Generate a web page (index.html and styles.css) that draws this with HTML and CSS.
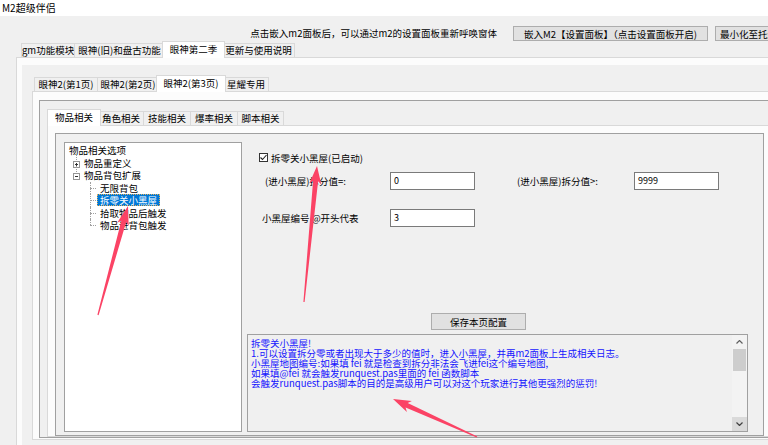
FILE: index.html
```html
<!DOCTYPE html>
<html>
<head>
    <meta charset="utf-8">
    <title>M2超级伴侣</title>
    <link rel="stylesheet" href="styles.css">
</head>
<body>
<div class="window">
    <div class="titlebar">M2超级伴侣</div>

    <!-- hint + top buttons -->
    <div class="toprow">
        <span class="hint">点击嵌入m2面板后，可以通过m2的设置面板重新呼唤窗体</span>
        <button class="btn btn-embed">嵌入M2【设置面板】（点击设置面板开启)</button>
        <button class="btn btn-tray">最小化至托盘</button>
    </div>

    <!-- level 1 tabs -->
    <div class="tabctl l1">
        <div class="tabs">
            <div class="tab">gm功能模块</div>
            <div class="tab">眼神(旧)和盘古功能</div>
            <div class="tab on">眼神第二季</div>
            <div class="tab">更新与使用说明</div>
        </div>
        <div class="panel">
            <div class="page1">

                <!-- level 2 tabs -->
                <div class="tabctl l2">
                    <div class="tabs">
                        <div class="tab">眼神2(第1页)</div>
                        <div class="tab">眼神2(第2页)</div>
                        <div class="tab on">眼神2(第3页)</div>
                        <div class="tab">星耀专用</div>
                    </div>
                    <div class="panel">
                        <div class="bevel">

                            <!-- level 3 tabs -->
                            <div class="tabctl l3">
                                <div class="tabs">
                                    <div class="tab on">物品相关</div>
                                    <div class="tab">角色相关</div>
                                    <div class="tab">技能相关</div>
                                    <div class="tab">爆率相关</div>
                                    <div class="tab">脚本相关</div>
                                </div>
                                <div class="panel">
                                    <div class="page3">
                                        <div class="tree">
                                            <div class="node lvl0">物品相关选项</div>
                                            <div class="node lvl1">
                                                <svg class="exp" width="7" height="7" viewBox="0 0 7 7"><rect x="0.5" y="0.5" width="6" height="6" fill="#fff" stroke="#969696"/><path d="M2 3.5h3M3.5 2v3" stroke="#333" stroke-width="1"/></svg>物品重定义
                                            </div>
                                            <div class="node lvl1">
                                                <svg class="exp" width="7" height="7" viewBox="0 0 7 7"><rect x="0.5" y="0.5" width="6" height="6" fill="#fff" stroke="#969696"/><path d="M2 3.5h3" stroke="#333" stroke-width="1"/></svg>物品背包扩展
                                            </div>
                                            <div class="node lvl2"><span class="label">无限背包</span></div>
                                            <div class="node lvl2"><span class="label selected">拆零关小黑屋</span></div>
                                            <div class="node lvl2"><span class="label">拾取物品后触发</span></div>
                                            <div class="node lvl2 last"><span class="label">物品进背包触发</span></div>
                                        </div>

                                        <div class="form">
                                            <div class="chk-row">
                                                <span class="chk">
                                                    <svg width="9" height="9" viewBox="0 0 9 9"><path d="M1.5 4.5l2 2 4-4.5" fill="none" stroke="#222" stroke-width="1.1"/></svg>
                                                </span>
                                                <span>拆零关小黑屋(已启动)</span>
                                            </div>
                                            <div class="field-row row1">
                                                <span class="lbl lbl-a">(进小黑屋)拆分值=:</span>
                                                <span class="edit">0</span>
                                                <span class="lbl lbl-b">(进小黑屋)拆分值&gt;:</span>
                                                <span class="edit">9999</span>
                                            </div>
                                            <div class="field-row row2">
                                                <span class="lbl lbl-c">小黑屋编号 @开头代表</span>
                                                <span class="edit">3</span>
                                            </div>
                                            <div class="save-row">
                                                <button class="btn btn-save">保存本页配置</button>
                                            </div>
                                            <div class="memo">
                                                <div class="memo-text">
                                                    <div>拆零关小黑屋!</div>
                                                    <div>1.可以设置拆分零或者出现大于多少的值时，进入小黑屋，并再m2面板上生成相关日志。</div>
                                                    <div>小黑屋地图编号:如果填 fei 就是检查到拆分非法会飞进fei这个编号地图,</div>
                                                    <div>如果填@fei 就会触发runquest.pas里面的 fei 函数脚本</div>
                                                    <div>会触发runquest.pas脚本的目的是高级用户可以对这个玩家进行其他更强烈的惩罚!</div>
                                                </div>
                                                <div class="sb">
                                                    <div class="sb-btn">
                                                        <svg width="7" height="4" viewBox="0 0 7 4"><path d="M0.5 3.5l3-3 3 3" fill="none" stroke="#606060" stroke-width="1.2"/></svg>
                                                    </div>
                                                    <div class="sb-thumb"></div>
                                                    <div class="sb-btn sb-down">
                                                        <svg width="7" height="4" viewBox="0 0 7 4"><path d="M0.5 0.5l3 3 3-3" fill="none" stroke="#404040" stroke-width="1.2"/></svg>
                                                    </div>
                                                </div>
                                            </div>
                                        </div>
                                    </div>
                                </div>
                            </div>

                        </div>
                    </div>
                </div>

            </div>
        </div>
    </div>

    <!-- red annotation arrows drawn over the screenshot -->
    <svg class="arrows" width="768" height="445" viewBox="0 0 768 445">
        <polygon points="98.6,315.2 126.2,222.1 128.7,225.9 128,206 117.2,222.7 121.3,220.8 97.4,314.8"/>
        <polygon points="304.6,302 318.1,181.2 321.3,184.5 317,166 309.3,183.4 313.1,180.7 303.4,302"/>
        <polygon points="477.3,436.4 407.7,402.9 411.9,401 393,399 406.9,411.9 405.6,407.5 476.7,437.6"/>
    </svg>
</div>
</body>
</html>
```

FILE: styles.css
```css
* {
    box-sizing: border-box;
}
body {
    margin: 0;
    width: 768px;
    height: 445px;
    overflow: hidden;
    background-color: #f0f0f0;
    font-family: "Noto Sans CJK SC", "Microsoft YaHei", sans-serif;
    font-size: 9.5px;
    color: #000;
}
.window {
    position: relative;
    width: 820px;
    height: 445px;
}
.titlebar {
    height: 16px;
    background-color: #fff;
    padding-left: 2px;
    line-height: 15px;
    font-size: 10px;
}
.toprow {
    height: 25px;
    padding-top: 10px;
    display: flex;
    align-items: flex-start;
}
.hint {
    width: 497px;
    text-align: right;
    line-height: 15px;
}
.btn {
    height: 15px;
    border: 1px solid #adadad;
    background-color: #e1e1e1;
    font-family: inherit;
    font-size: 9.5px;
    line-height: 12px;
    padding: 0 4px;
    color: #000;
    white-space: nowrap;
}
.btn-embed {
    margin-left: 16px;
    width: 195px;
}
.btn-tray {
    margin-left: 7px;
    width: 80px;
    text-align: left;
}

/* tab controls */
.tabctl.l1 {
    margin-left: 16px;
}
.tabs {
    display: flex;
    align-items: flex-end;
    height: 16px;
    position: relative;
    z-index: 1;
}
.l1 > .tabs {
    padding-left: 5px;
}
.l2 > .tabs,
.l3 > .tabs {
    padding-left: 2px;
}
.tab {
    width: var(--w);
    height: 14px;
    margin-right: -1px;
    border: 1px solid #d9d9d9;
    border-bottom: none;
    background-color: #f0f0f0;
    text-align: center;
    line-height: 12px;
    white-space: nowrap;
}
.tab.on {
    width: calc(var(--w) + 4px);
    height: 17px;
    margin-left: -2px;
    margin-right: -3px;
    margin-bottom: -1px;
    background-color: #fff;
    line-height: 14px;
    position: relative;
    z-index: 2;
}
.l1 > .tabs .tab:nth-child(1) { --w: 54px; }
.l1 > .tabs .tab:nth-child(2) { --w: 91px; }
.l1 > .tabs .tab:nth-child(3) { --w: 59px; }
.l1 > .tabs .tab:nth-child(4) { --w: 73px; }
.l2 > .tabs .tab:nth-child(1) { --w: 64px; }
.l2 > .tabs .tab:nth-child(2) { --w: 62px; }
.l2 > .tabs .tab:nth-child(3) { --w: 66px; }
.l2 > .tabs .tab:nth-child(4) { --w: 46px; }
.l3 > .tabs .tab:nth-child(1) { --w: 50px; }
.l3 > .tabs .tab:nth-child(2) { --w: 46px; }
.l3 > .tabs .tab:nth-child(3) { --w: 48px; }
.l3 > .tabs .tab:nth-child(4) { --w: 48px; }
.l3 > .tabs .tab:nth-child(5) { --w: 47px; }

.panel {
    border: 1px solid #d9d9d9;
    background-color: #fcfcfc;
}
.l1 > .panel {
    padding: 7px 0 0 5px;
    height: 400px;
}
.page1 {
    background-color: #f0f0f0;
    height: 100%;
    padding: 10px 0 0 10px;
}
.l2 > .panel {
    padding: 8px 6px 1px 6px;
}
.bevel {
    border: 1px solid #a0a0a0;
    background-color: #f0f0f0;
    padding: 8px 5px 0 7px;
}
.l3 {
    width: 723px;
}
.l3 > .panel {
    padding: 7px 5px 0 7px;
}
.page3 {
    width: 709px;
    height: 303px;
    border: 1px solid #a0a0a0;
    background-color: #f0f0f0;
    padding: 8px 0 0 8px;
    display: flex;
    align-items: flex-start;
}

/* tree view */
.tree {
    width: 178px;
    height: 290px;
    border: 1px solid #a0a0a0;
    background-color: #fff;
    padding-top: 1px;
}
.node {
    position: relative;
    height: 12.5px;
    line-height: 12.5px;
    white-space: nowrap;
}
.lvl0 {
    padding-left: 4px;
}
.lvl1 {
    padding-left: 8px;
}
.lvl1::before {
    content: '';
    position: absolute;
    left: 11px;
    top: -3px;
    height: 6px;
    border-left: 1px dotted #a0a0a0;
}
.exp {
    display: inline-block;
    vertical-align: -1px;
    margin-right: 4px;
}
.lvl2 {
    padding-left: 32px;
}
.lvl2::before {
    content: '';
    position: absolute;
    left: 25px;
    top: 0;
    bottom: 0;
    border-left: 1px dotted #a0a0a0;
}
.lvl2.last::before {
    bottom: 50%;
}
.lvl2::after {
    content: '';
    position: absolute;
    left: 25px;
    top: 50%;
    width: 6px;
    border-top: 1px dotted #a0a0a0;
}
.label {
    display: inline-block;
    height: 12px;
    line-height: 11px;
    padding: 0 2px;
    border: 1px solid transparent;
}
.label.selected {
    background-color: #0078d7;
    color: #fff;
    border: 1px dotted #e0b060;
}

/* right form */
.form {
    flex: 1;
    display: flex;
    flex-direction: column;
}
.chk-row {
    margin: 9px 0 0 17px;
    height: 13px;
    display: flex;
    align-items: center;
    gap: 3px;
}
.chk {
    width: 9px;
    height: 9px;
    border: 1px solid #333;
    background-color: #fff;
    display: flex;
}
.chk svg {
    margin: -1px;
}
.field-row {
    display: flex;
    align-items: center;
    height: 18px;
}
.row1 {
    margin-top: 8px;
}
.row2 {
    margin-top: 19px;
}
.lbl {
    white-space: nowrap;
}
.lbl-a {
    margin-left: 23px;
    width: 125px;
}
.lbl-b {
    margin-left: 42px;
    width: 117px;
}
.lbl-c {
    margin-left: 20px;
    width: 128px;
}
.edit {
    width: 85px;
    height: 18px;
    border: 1px solid #7a7a7a;
    background-color: #fff;
    padding-left: 3px;
    line-height: 15px;
    font-size: 9px;
}
.save-row {
    margin-top: 86px;
    height: 17px;
}
.btn-save {
    margin-left: 189px;
    width: 95px;
    height: 17px;
    line-height: 14px;
}

/* memo */
.memo {
    margin: 4px 0 0 5px;
    width: 501px;
    height: 98px;
    border: 1px solid #a0a0a0;
    background-color: #f0f0f0;
    display: flex;
}
.memo-text {
    flex: 1;
    padding: 3px 0 0 3px;
    color: #1414ff;
    line-height: 10px;
    white-space: nowrap;
    overflow: hidden;
}
.sb {
    width: 15px;
    display: flex;
    flex-direction: column;
    background-color: #f3f3f3;
}
.sb-btn {
    height: 14px;
    display: flex;
    align-items: center;
    justify-content: center;
}
.sb-thumb {
    height: 22px;
    margin: 0 1px;
    background-color: #cdcdcd;
}
.sb-down {
    margin-top: auto;
    background-color: #dadada;
}

.arrows {
    position: absolute;
    left: 0;
    top: 0;
    pointer-events: none;
    fill: #fb4365;
}
```
